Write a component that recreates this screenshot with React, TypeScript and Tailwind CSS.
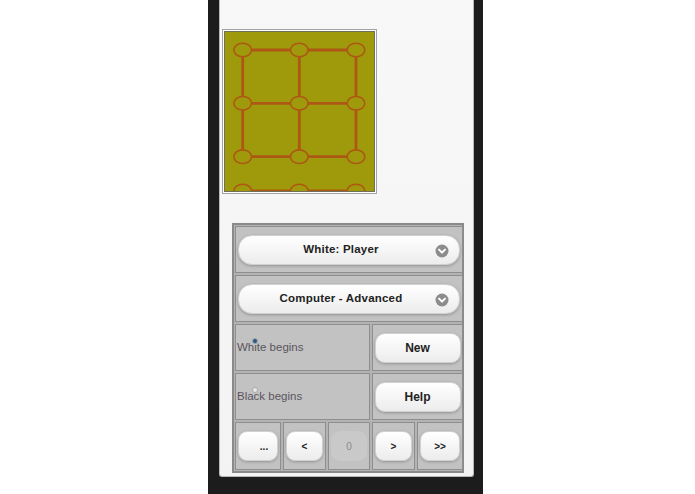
import React from 'react'

const font = { fontFamily: '"Liberation Sans", Arial, sans-serif' }

function Chevron() {
  return (
    <svg width="14" height="14" viewBox="0 0 14 14" className="shrink-0">
      <circle cx="7" cy="7" r="6.5" fill="#8c8c8c" />
      <path d="M4 5.6 L7 8.6 L10 5.6" fill="none" stroke="#fff" strokeWidth="2" strokeLinecap="round" strokeLinejoin="round" />
    </svg>
  )
}

function Board() {
  const cols = [17.7, 74.3, 131]
  const rows = [18, 71.3, 124.7, 159]
  const line = '#ad5814'
  return (
    <div className="ml-[2px] mt-[29px] w-[155px] border border-[#a2a2a2] bg-white p-px">
      <div className="border border-[#6f6f5a]">
        <svg width="149" height="159" viewBox="0 0 149 159" className="block bg-[#9f9a0b]">
          {rows.map((y) => (
            <line key={'h' + y} x1={cols[0]} y1={y} x2={cols[2]} y2={y} stroke={line} strokeWidth="2.8" />
          ))}
          {cols.map((x) => (
            <line key={'v' + x} x1={x} y1={rows[0]} x2={x} y2={rows[2]} stroke={line} strokeWidth="2.8" />
          ))}
          {rows.map((y) =>
            cols.map((x) => (
              <ellipse key={x + '-' + y} cx={x} cy={y} rx="8.8" ry="6.8" fill="#9f9a0b" stroke={line} strokeWidth="1.6" />
            ))
          )}
        </svg>
      </div>
    </div>
  )
}

const btn =
  'flex h-[30px] items-center justify-center bg-gradient-to-b from-white to-[#ececec] border border-[#d0d0d0] shadow-[0_1px_3px_rgba(0,0,0,0.25)] font-bold text-[#222]'

const cell = 'flex items-center bg-[#c2c2c2] border border-[#8e8e8e]'

function SelectButton({ label }: { label: string }) {
  return (
    <div className={`${cell} col-span-5 h-[47px] px-[2px]`}>
      <div className={`${btn} relative w-full rounded-[14px] pl-3 pr-7 text-[11.5px] tracking-[0.2px]`}>
        <span>{label}</span>
        <span className="absolute right-[10px] top-[8px]">
          <Chevron />
        </span>
      </div>
    </div>
  )
}

function RadioCell({ label, checked }: { label: string; checked: boolean }) {
  return (
    <div className={`${cell} relative col-span-3 h-[47px] pl-[1px]`}>
      <span className="text-[11.5px] text-[#5b5560]">{label}</span>
      <span
        className={`absolute left-[16px] top-[13px] size-[6px] rounded-full ${
          checked ? 'bg-[#2f5674] border border-[#9ab]' : 'bg-[#e8e8e8] border border-[#aaa]'
        }`}
      />
    </div>
  )
}

function ActionCell({ label }: { label: string }) {
  return (
    <div className={`${cell} col-span-2 h-[47px] justify-center`}>
      <div className={`${btn} w-[86px] rounded-[10px] text-[12px]`}>{label}</div>
    </div>
  )
}

function NavCell({ label, disabled, className = '' }: { label: string; disabled?: boolean; className?: string }) {
  return (
    <div className={`${cell} h-[48px] justify-center px-[2px]`}>
      {disabled ? (
        <div className="flex h-[30px] w-full items-center justify-center rounded-[9px] bg-[#c9c9c9] text-[10px] text-[#8a8a8a]">
          {label}
        </div>
      ) : (
        <div className={`${btn} w-full rounded-[9px] text-[10px] ${className}`}>{label}</div>
      )}
    </div>
  )
}

export default function App() {
  return (
    <div className="min-h-[494px] bg-white" style={font}>
      <div className="ml-[208px] flex h-[494px] w-[275px] bg-[#1c1c1c] pl-[11px] pr-[9px]">
        <div className="flex h-[477px] w-full flex-col rounded-b-[3px] border border-t-0 border-[#b8b8b8] bg-gradient-to-b from-[#f8f8f8] to-[#f3f3f3]">
          <Board />

          {/* Controls */}
          <div className="ml-[12px] mt-[29px] w-[232px] border-2 border-[#8a8a8a] bg-[#b3b3b3] p-px">
            <div className="grid grid-cols-[46px_43px_42px_43px_46px] gap-[2px]">
              <SelectButton label="White: Player" />
              <SelectButton label="Computer - Advanced" />
              <RadioCell label="White begins" checked />
              <ActionCell label="New" />
              <RadioCell label="Black begins" checked={false} />
              <ActionCell label="Help" />
              <NavCell label="..." className="pl-3" />
              <NavCell label="<" />
              <NavCell label="0" disabled />
              <NavCell label=">" />
              <NavCell label=">>" />
            </div>
          </div>
        </div>
      </div>
    </div>
  )
}
